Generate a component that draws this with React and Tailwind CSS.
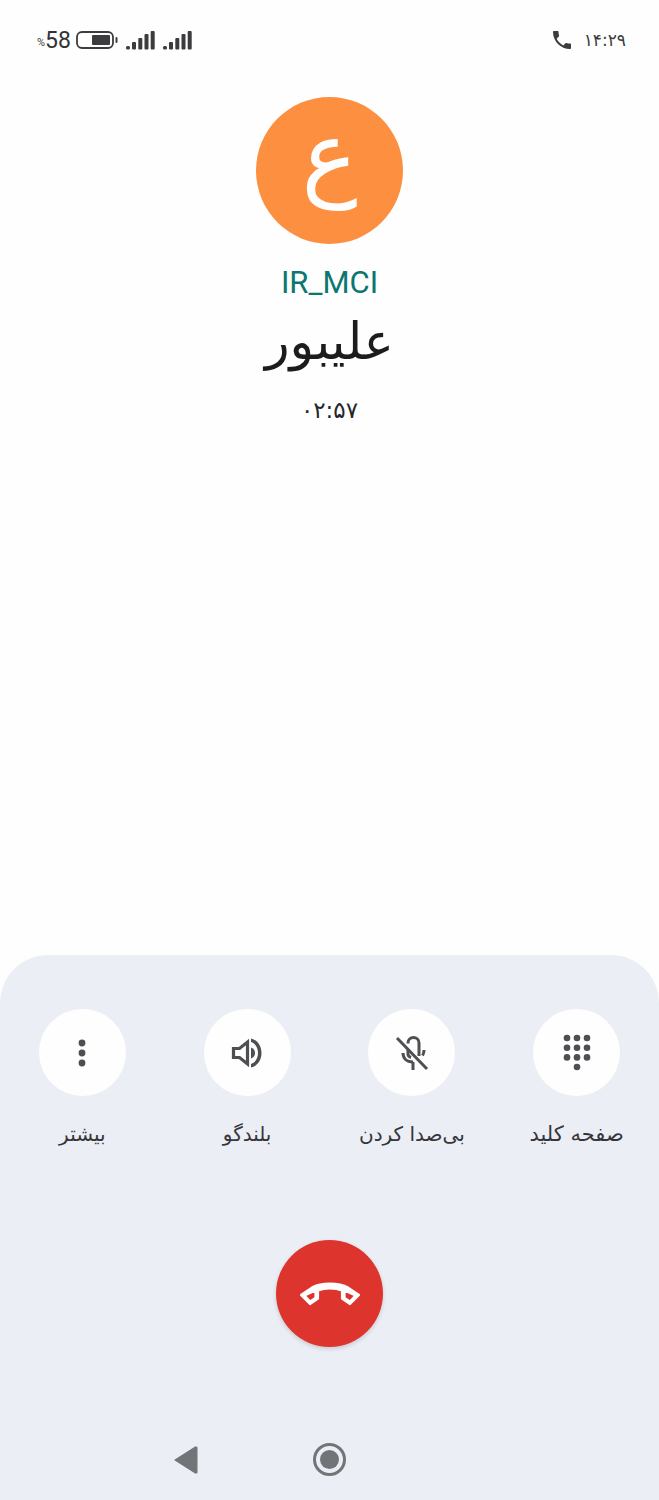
// in-call screen, rtl phone dialer
import React from "react";

const actions = [
  { label: "بیشتر", icon: <MoreIcon />, size: "text-[20px]" },
  { label: "بلندگو", icon: <SpeakerIcon />, size: "text-[20px]" },
  { label: "بی‌صدا کردن", icon: <MicOffIcon />, size: "text-[20px]" },
  { label: "صفحه کلید", icon: <KeypadIcon />, size: "text-[21px]" },
];

function MoreIcon() {
  return (
    <svg width="30" height="30" viewBox="0 0 30 30" fill="#4d4f52">
      <circle cx="15" cy="5" r="3.400" />
      <circle cx="15" cy="15" r="3.400" />
      <circle cx="15" cy="25" r="3.400" />
    </svg>
  );
}

function SpeakerIcon() {
  return (
    <svg width="32" height="32" viewBox="0 0 32 32" fill="none">
      <path d="M2.500 11.500h6l8-6.500v22l-8-6.500h-6z" stroke="#4d4f52" strokeWidth="3.200" strokeLinejoin="miter" />
      <path d="M20 10.500c3 1.200 4 3.200 4 5.500s-1 4.300-4 5.500z" fill="#4d4f52" />
      <path d="M20 1.500c6.500 1.500 10.500 7.500 10.500 14.500S26.500 29 20 30.500v-3.600c4.500-1.400 7-5.700 7-10.900s-2.500-9.500-7-10.900z" fill="#4d4f52" />
    </svg>
  );
}

function MicOffIcon() {
  return (
    <svg width="34" height="36" viewBox="0 0 34 36" fill="none" stroke="#4d4f52" strokeWidth="3">
      <path d="M13 8.500V8a5.500 5.500 0 0 1 11 0v13" />
      <path d="M8 18c0 5 3.500 9 10 9" />
      <path d="M29 15c0 2-.5 4-1.500 5.500" />
      <path d="M18 27v8" />
      <path d="M13 14v5c0 2 1.500 3 3 3.500" />
      <path d="M2 3l30 31" />
    </svg>
  );
}

function KeypadIcon() {
  const dots = [];
  [4, 13.700, 23.400].forEach((cy) => {
    [4, 14, 24].forEach((cx) => {
      dots.push(<circle key={`${cx}-${cy}`} cx={cx} cy={cy} r="3.300" />);
    });
  });
  return (
    <svg width="28" height="37" viewBox="0 0 28 37" fill="#4d4f52">
      {dots}
      <circle cx="14" cy="33" r="3.300" />
    </svg>
  );
}

function SignalBars() {
  return (
    <svg width="29" height="20" viewBox="0 0 29 20" fill="#3c3c3e">
      <rect x="0" y="16" width="4" height="3.500" rx="1.500" />
      <rect x="6" y="12" width="4" height="7.500" rx="1" />
      <rect x="12.300" y="8" width="4" height="11.500" rx="1" />
      <rect x="18.500" y="4" width="4" height="15.500" rx="1" />
      <rect x="24.700" y="1" width="4" height="18.500" rx="1" />
    </svg>
  );
}

export default function App() {
  return (
    <div className="flex h-[1500px] w-[659px] flex-col overflow-hidden bg-[#fefefe] font-['Roboto','DejaVu_Sans',sans-serif]">
      {/* status bar */}
      <div className="flex items-center justify-between pl-[37px] pr-[33px] pt-[28px]">
        <div className="flex h-[24px] items-center">
          <span className="mt-[5px] text-[11px] leading-none text-[#3c3c3e]">%</span>
          <span className="text-[23px] leading-none text-[#333335]">58</span>
          <svg className="ml-[5px]" width="42" height="18" viewBox="0 0 42 18" fill="none">
            <rect x="1" y="1" width="36" height="16" rx="5" stroke="#3c3c3e" strokeWidth="1.800" />
            <rect x="16" y="4" width="18" height="10" rx="1" fill="#3c3c3e" />
            <rect x="39.500" y="6" width="2" height="6" rx="1" fill="#3c3c3e" />
          </svg>
          <div className="ml-[8px]"><SignalBars /></div>
          <div className="ml-[8px]"><SignalBars /></div>
        </div>
        <div className="flex h-[24px] items-center">
          <svg width="24" height="24" viewBox="0 0 24 24" fill="#3c3c3e">
            <path d="M6.620 10.790c1.440 2.830 3.760 5.140 6.590 6.590l2.200-2.200c.27-.27.67-.36 1.020-.24 1.120.37 2.330.57 3.570.57.55 0 1 .45 1 1V20c0 .55-.45 1-1 1-9.390 0-17-7.610-17-17 0-.55.45-1 1-1h3.500c.55 0 1 .45 1 1 0 1.250.2 2.450.57 3.570.11.350.03.740-.25 1.020l-2.200 2.200z" />
          </svg>
          <span className="ml-[10px] text-[17px] leading-none text-[#3c3c3e] font-['DejaVu_Sans',sans-serif]">۱۴:۲۹</span>
        </div>
      </div>

      {/* caller */}
      <div className="flex flex-1 flex-col items-center pt-[45px]">
        <div className="flex h-[147px] w-[147px] items-center justify-center rounded-full bg-[#fc9040]">
          <span className="mb-[30px] text-[94px] leading-none text-[#fefefe] font-['DejaVu_Sans',sans-serif]">ع</span>
        </div>
        <div className="mt-[20px] text-[31px] leading-[38px] text-[#0d7670]">IR_MCI</div>
        <div dir="rtl" className="mt-[7px] text-[51px] leading-[66px] text-[#1c1c1e] font-['DejaVu_Sans',sans-serif]">علیبور</div>
        <div className="mt-[20px] text-[23px] leading-[30px] text-[#26262a] font-['DejaVu_Sans',sans-serif]">۰۲:۵۷</div>
      </div>

      {/* bottom panel */}
      <div className="flex h-[545px] flex-col items-center rounded-t-[48px] bg-[#ebeff5] pt-[54px]">
        <div className="grid w-full grid-cols-4">
          {actions.map((a) => (
            <div key={a.label} className="flex flex-col items-center">
              <div className="flex h-[87px] w-[87px] items-center justify-center rounded-full bg-[#fefefe]">
                {a.icon}
              </div>
              <div dir="rtl" className={`mt-[24px] leading-[28px] whitespace-nowrap text-[#36363a] font-['DejaVu_Sans',sans-serif] ${a.size}`}>
                {a.label}
              </div>
            </div>
          ))}
        </div>

        <button className="mt-[92px] flex h-[107px] w-[107px] items-center justify-center rounded-full bg-[#de342e] shadow-[0_2px_4px_rgba(0,0,0,0.15)]">
          <svg width="62" height="26" viewBox="-1 -1 62 26" fill="#fff" stroke="#fff" strokeWidth="2.200" strokeLinejoin="round">
            <path fillRule="evenodd" d="M1 13 13 5C18 2 24 1.500 30 1.500S42 2 47 5l12 8-9 9-8-5.500V8.500C38 7 34 6.500 30 6.500s-8 .5-12 2v8L10 22zM4.500 13.500l5.500 6 5.500-3.500V8.500zM55.500 13.500l-5.500 6-5.500-3.500V8.500z" />
          </svg>
        </button>

        <div className="mt-[96px] grid w-[432px] grid-cols-3 items-center justify-items-center">
          <svg width="26" height="30" viewBox="0 0 26 30" fill="#717578">
            <path d="M23 1.500c1 0 1.500.5 1.500 1.500v24c0 1-.5 1.500-1.500 1.500-.5 0-1 0-1.300-.3L1 15 21.700 1.800c.3-.2.800-.3 1.300-.3z" />
          </svg>
          <div className="flex h-[33px] w-[33px] items-center justify-center rounded-full border-[3px] border-[#717578]">
            <div className="h-[19px] w-[19px] rounded-full bg-[#717578]" />
          </div>
          <div />
        </div>
      </div>
    </div>
  );
}
